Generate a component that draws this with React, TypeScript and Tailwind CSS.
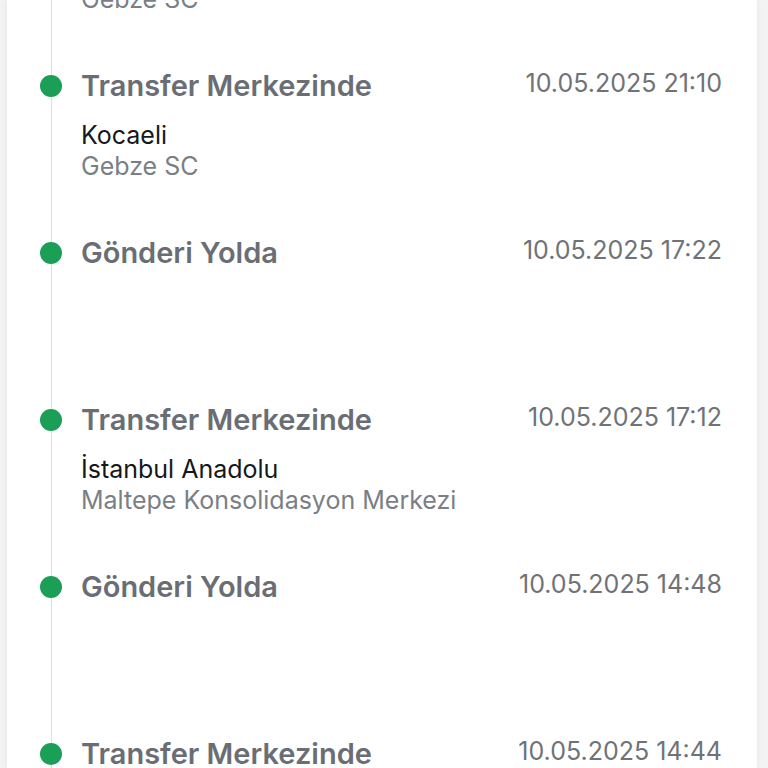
const events = [
  {
    title: 'Transfer Merkezinden Çıktı',
    date: '10.05.2025 23:05',
    city: 'Kocaeli',
    place: 'Gebze SC',
  },
  {
    title: 'Transfer Merkezinde',
    date: '10.05.2025 21:10',
    city: 'Kocaeli',
    place: 'Gebze SC',
  },
  { title: 'Gönderi Yolda', date: '10.05.2025 17:22' },
  {
    title: 'Transfer Merkezinde',
    date: '10.05.2025 17:12',
    city: 'İstanbul Anadolu',
    place: 'Maltepe Konsolidasyon Merkezi',
  },
  { title: 'Gönderi Yolda', date: '10.05.2025 14:48' },
  {
    title: 'Transfer Merkezinde',
    date: '10.05.2025 14:44',
    city: 'İstanbul Anadolu',
    place: 'Maltepe Konsolidasyon Merkezi',
  },
];

type Event = (typeof events)[number] & { city?: string; place?: string };

const TimelineItem = ({ item }: { item: Event }) => {
  return (
    <div className="flex h-[167px]">
      <div className="flex w-[22px] shrink-0 flex-col items-center">
        <div className="h-[6px] w-px bg-[#dfe0e2]" />
        <div className="h-[22px] w-[22px] rounded-full bg-[#1b9e55]" />
        <div className="w-px flex-1 bg-[#dfe0e2]" />
      </div>
      <div className="ml-[19px] flex flex-1 flex-col">
        <div className="flex items-start justify-between">
          <div className="text-[29px] font-semibold leading-[34px] text-[#6a6e74]">
            {item.title}
          </div>
          <div className="text-[25px] leading-[28px] text-[#6f7378]">
            {item.date}
          </div>
        </div>
        {item.city && (
          <div className="mt-[17px] text-[25px] leading-[31px]">
            <div className="text-[#16181c]">{item.city}</div>
            <div className="text-[#7a7f86]">{item.place}</div>
          </div>
        )}
      </div>
    </div>
  );
};

const App = () => {
  return (
    <div
      className="h-screen overflow-hidden bg-[#f3f3f3]"
      style={{ fontFamily: 'Inter, "Noto Sans", sans-serif' }}
    >
      <div className="ml-[7px] h-full w-[750px] overflow-hidden bg-white pl-[33px] pr-[35px] shadow-[0_0_6px_rgba(0,0,0,0.06)]">
        <div className="-mt-[98px]">
          {events.map((item, i) => (
            <TimelineItem key={i} item={item} />
          ))}
        </div>
      </div>
    </div>
  );
};

export default App;
